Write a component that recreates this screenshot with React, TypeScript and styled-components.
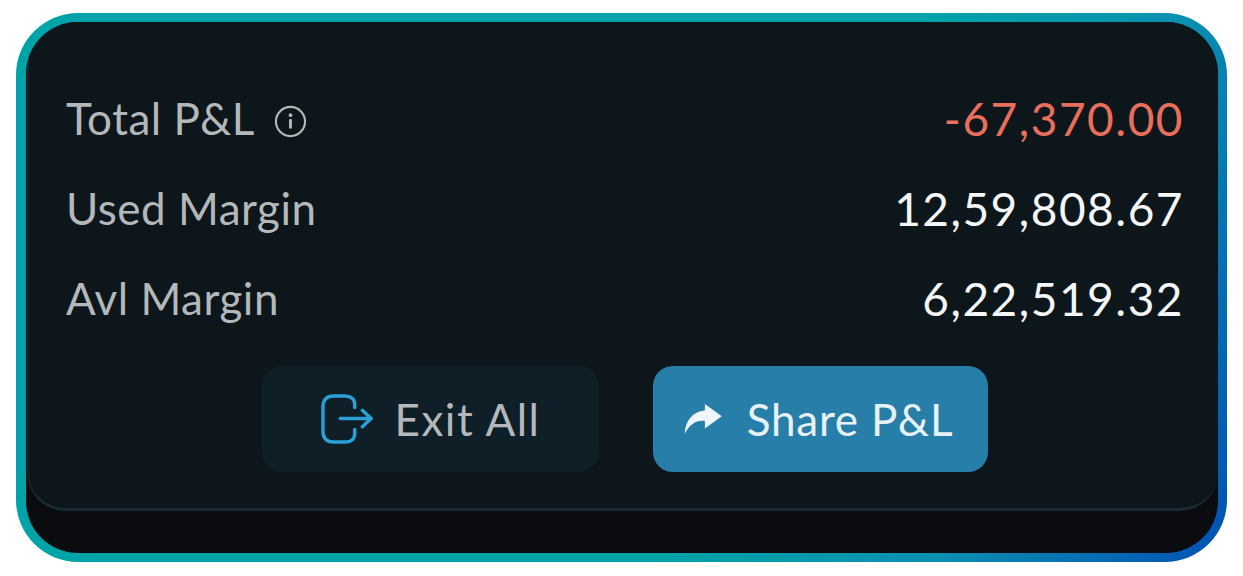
import React from 'react';
import styled, { createGlobalStyle } from 'styled-components';

const Global = createGlobalStyle`
  html, body {
    margin: 0;
    padding: 0;
    background: #ffffff;
  }
`;
const Frame = styled.div`
  box-sizing: border-box;
  width: 1211px;
  height: 549px;
  margin: 13px 0 0 16px;
  padding: 9px 9px 9px 10px;
  border-radius: 62px;
  background: linear-gradient(115deg, #00a3a8 0%, #00a3a8 62%, #0a90b0 80%, #0050b4 100%);
`;
const Inner = styled.div`
  height: 100%;
  border-radius: 52px;
  overflow: hidden;
  background: #0a0c10;
`;
const Card = styled.div`
  box-sizing: border-box;
  height: 489px;
  padding: 71px 34px 0 37px;
  margin-left: 1px;
  background: #0d161a;
  border-left: 2px solid #14242e;
  border-bottom: 3px solid #182c38;
  border-radius: 0 0 38px 38px;
  font-family: "Lato", "Noto Sans", sans-serif;
`;
const Row = styled.div`
  display: flex;
  align-items: center;
  justify-content: space-between;
  height: 50px;
  margin-bottom: 40px;
`;
const Label = styled.div`
  display: flex;
  align-items: center;
  gap: 19px;
  font-size: 44px;
  color: #b4b8ba;
  letter-spacing: 0.5px;
`;
const Value = styled.div<{ $loss?: boolean }>`
  font-size: 46px;
  letter-spacing: 1.5px;
  color: ${(p) => (p.$loss ? '#e96f5c' : '#f4f6f7')};
`;
const Actions = styled.div`
  display: flex;
  justify-content: center;
  gap: 54px;
  margin-top: 43px;
`;
const Button = styled.div<{ $primary?: boolean }>`
  box-sizing: border-box;
  display: flex;
  align-items: center;
  justify-content: center;
  gap: ${(p) => (p.$primary ? '25px' : '22px')};
  width: ${(p) => (p.$primary ? '335px' : '337px')};
  height: 106px;
  padding-right: ${(p) => (p.$primary ? '4px' : '0')};
  border-radius: 20px;
  font-size: 44px;
  letter-spacing: ${(p) => (p.$primary ? '0.8px' : '1.5px')};
  background: ${(p) => (p.$primary ? '#267ea9' : '#0e1f28')};
  color: ${(p) => (p.$primary ? '#e6f2f7' : '#b4b8ba')};
`;
const InfoSvg = styled.svg`
  margin-top: 7px;
`;

function InfoIcon() {
  return (
    <InfoSvg width="33" height="33" viewBox="0 0 34 34" fill="none">
      <circle cx="17" cy="17" r="15" stroke="#b4b8ba" strokeWidth="2.2" />
      <circle cx="17" cy="10.5" r="1.9" fill="#b4b8ba" />
      <rect x="15.5" y="14.5" width="3" height="10" rx="1.2" fill="#b4b8ba" />
    </InfoSvg>
  );
}

function ExitIcon() {
  return (
    <svg width="52" height="50" viewBox="0 0 54 52" fill="none" stroke="#2a9fd8" strokeWidth="3.6" strokeLinecap="round" strokeLinejoin="round">
      <path d="M35 14 V11 C35 5 31 2 25 2 H13 C6 2 2 6 2 13 V39 C2 46 6 50 13 50 H25 C31 50 35 47 35 41 V37" />
      <path d="M20 25.5 H52" />
      <path d="M43 17 L52 25.5 L43 34" />
    </svg>
  );
}

function ShareIcon() {
  return (
    <svg width="38" height="30" viewBox="0 0 40 32" fill="#eef6fa">
      <path d="M22 0 L40 13 L22 26 V18 C13 17 6 21 0.5 32 C1 18 9 8 22 7 Z" />
    </svg>
  );
}

export default function App() {
  return (
    <>
      <Global />
      <Frame>
        <Inner>
          <Card>
            <Row>
              <Label>
                Total P&amp;L
                <InfoIcon />
              </Label>
              <Value $loss>-67,370.00</Value>
            </Row>
            <Row>
              <Label>Used Margin</Label>
              <Value>12,59,808.67</Value>
            </Row>
            <Row>
              <Label>Avl Margin</Label>
              <Value>6,22,519.32</Value>
            </Row>
            <Actions>
              <Button>
                <ExitIcon />
                Exit All
              </Button>
              <Button $primary>
                <ShareIcon />
                Share P&amp;L
              </Button>
            </Actions>
          </Card>
        </Inner>
      </Frame>
    </>
  );
}
